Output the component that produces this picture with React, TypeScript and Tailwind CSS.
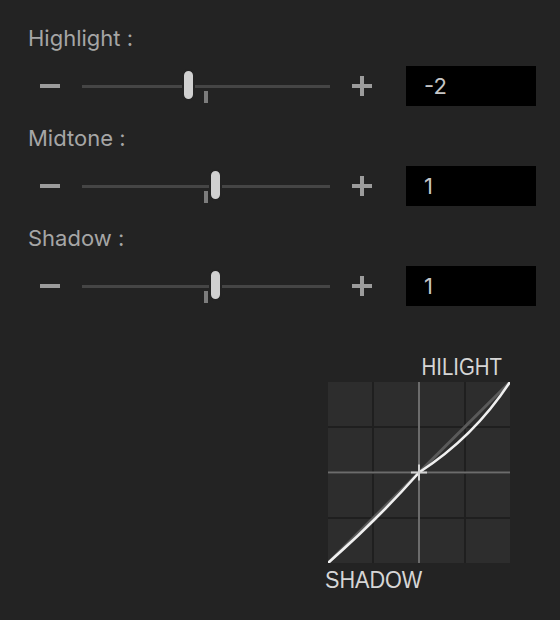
const rows = [
  { label: 'Highlight :', value: -2 },
  { label: 'Midtone :', value: 1 },
  { label: 'Shadow :', value: 1 },
];

function Slider({ value }: { value: number }) {
  // track is 248px wide, the zero tick sits at its middle
  const center = 124 + value * 9;
  return (
    <div className="relative h-[3px] w-[248px] bg-[#454545]">
      <div className="absolute left-[122px] top-[6px] h-[12px] w-[4px] bg-[#7c7c7c]" />
      <div
        className="absolute top-[-16px] h-[32px] w-[13px] rounded-full border-2 border-[#232323] bg-[#d0d0d0]"
        style={{ left: center - 6.5 }}
      />
    </div>
  );
}

function Row({ label, value }: { label: string; value: number }) {
  return (
    <div className="flex flex-col">
      <div className="h-[26px] text-[22px] leading-[26px] text-[#a6a6a6]">{label}</div>
      <div className="mt-[15px] flex h-10 items-center">
        <div className="ml-[12px] h-[4px] w-[20px] bg-[#9c9c9c]" />
        <div className="ml-[22px]">
          <Slider value={value} />
        </div>
        <div className="relative ml-[22px] h-[20px] w-[20px]">
          <div className="absolute left-0 top-[8px] h-[4px] w-[20px] bg-[#9c9c9c]" />
          <div className="absolute left-[8px] top-0 h-[20px] w-[4px] bg-[#9c9c9c]" />
        </div>
        <div className="ml-[34px] flex h-10 w-[130px] items-center bg-black pl-[18px] text-[22px] text-[#c6c6c6]">
          {value}
        </div>
      </div>
    </div>
  );
}

function Curve() {
  return (
    <div className="relative h-[181px] w-[182px]">
      <div className="grid h-full w-full grid-cols-4 grid-rows-4 gap-[2px] bg-[#1f1f1f]">
        {Array.from({ length: 16 }).map((_, i) => (
          <div key={i} className="bg-[#2d2d2d]" />
        ))}
      </div>
      <svg className="absolute inset-0" width="182" height="181" viewBox="0 0 182 181">
        <line x1="91" y1="0" x2="91" y2="181" stroke="#6c6c6c" strokeWidth="2" />
        <line x1="0" y1="90.5" x2="182" y2="90.5" stroke="#6c6c6c" strokeWidth="2" />
        <line x1="0" y1="181" x2="182" y2="0" stroke="#5a5a5a" strokeWidth="3" />
        <path
          d="M0 181 Q50 137 91 90.5 Q146 55 182 0"
          fill="none"
          stroke="#f0f0f0"
          strokeWidth="2.6"
        />
        <line x1="83" y1="90.5" x2="99" y2="90.5" stroke="#d2d2d2" strokeWidth="2" />
        <line x1="91" y1="82.5" x2="91" y2="98.5" stroke="#d2d2d2" strokeWidth="2" />
      </svg>
    </div>
  );
}

export default function App() {
  return (
    <div
      className="h-[620px] w-[560px] bg-[#232323] pl-[28px] pt-[25px]"
      style={{ fontFamily: 'Inter, "Noto Sans", sans-serif' }}
    >
      <div className="flex flex-col gap-[19px]">
        {rows.map((r) => (
          <Row key={r.label} label={r.label} value={r.value} />
        ))}
      </div>

      {/* Tone curve preview */}
      <div className="ml-[300px] mt-[49px] flex w-[182px] flex-col font-['Liberation_Sans',sans-serif] text-[#d6d6d6]">
        <div className="mb-[3px] mr-[8px] h-[24px] origin-right scale-x-[0.85] text-right text-[24px] leading-[24px]">
          HILIGHT
        </div>
        <Curve />
        <div className="ml-[-3px] mt-[5px] h-[24px] origin-left scale-x-[0.9] text-[24px] leading-[24px]">
          SHADOW
        </div>
      </div>
    </div>
  );
}
